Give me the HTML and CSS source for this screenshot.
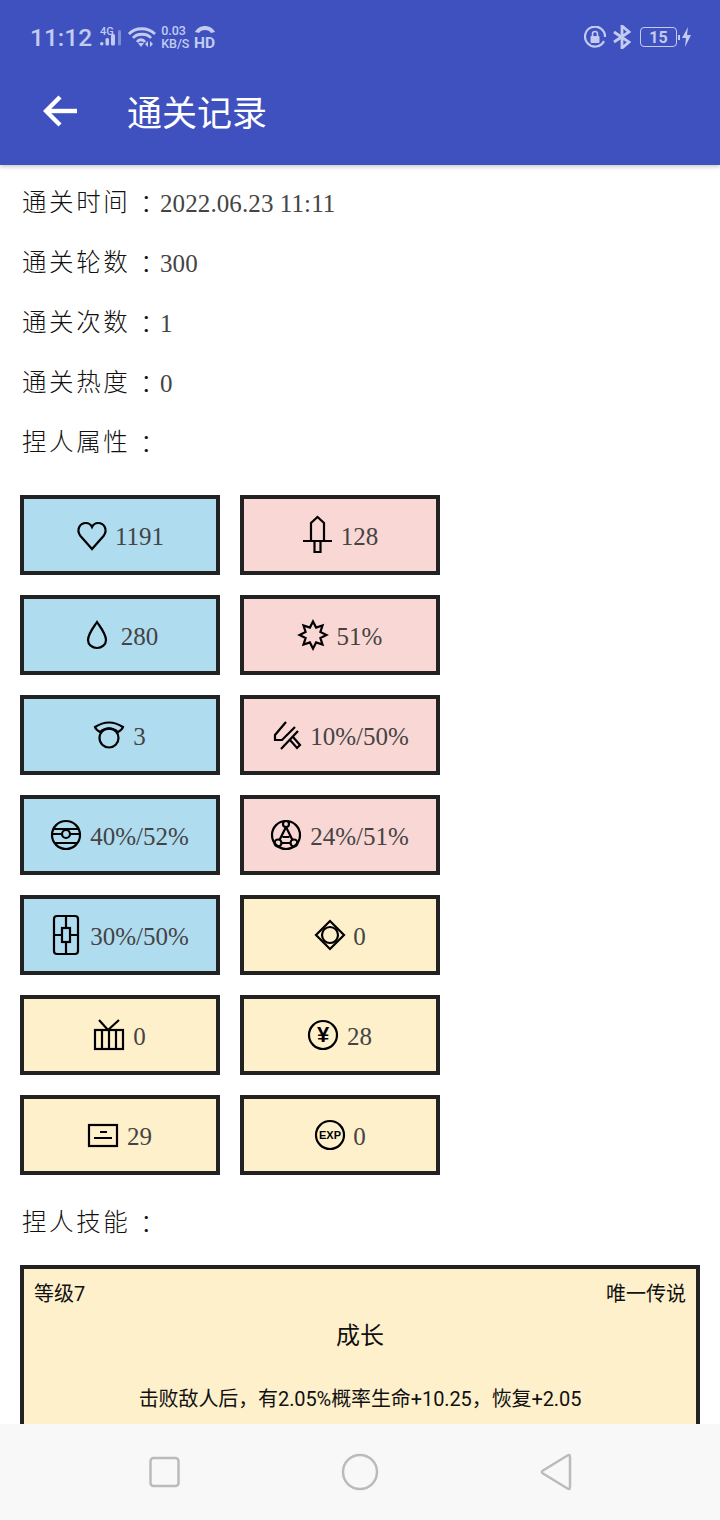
FILE: index.html
```html
<!DOCTYPE html>
<html>
  <head>
    <title>通关记录</title>
    <link rel="stylesheet" href="styles.css">
  </head>
  <body>
    <div class="app">
      <!-- Status bar and toolbar -->
      <header class="appbar">
        <div class="statusbar">
          <div class="status-left">
            <span class="clock">11:12</span>
            <svg class="st-signal" width="26" height="24" viewBox="0 0 26 24">
              <text x="1" y="10" class="st-tiny">4G</text>
              <rect x="1" y="17" width="3.500" height="3.500" rx="1.700" fill="#c3cbf0"/>
              <rect x="6.500" y="13" width="3.500" height="7.500" rx="1.500" fill="#c3cbf0"/>
              <rect x="12" y="9" width="4" height="11.500" rx="1.500" fill="#c3cbf0"/>
              <rect x="19" y="5" width="3" height="15.500" rx="1.500" fill="#7f8dd6"/>
            </svg>
            <svg class="st-wifi" width="28" height="22" viewBox="0 0 28 22" fill="none" stroke="#c3cbf0" stroke-width="2.800">
              <path d="M1 8C7 1 20 1 27 8"/>
              <path d="M5 12C9 7 19 7 23 12"/>
              <path d="M9 16C11 13 15 13 17 16"/>
              <path d="M13 21L10 17H16Z" fill="#c3cbf0" stroke="none"/>
              <path d="M20 15V21L17 18ZM22 15V21L25 18Z" fill="#c3cbf0" stroke="none"/>
            </svg>
            <span class="st-speed"><span>0.03</span><span>KB/S</span></span>
            <svg class="st-hd" width="24" height="28" viewBox="0 0 24 28">
              <path d="M1 9C5 1 17 1 21 9L17 10C15 6 7 6 5 10Z" fill="#c3cbf0"/>
              <text x="0" y="25" class="st-hd-text">HD</text>
            </svg>
          </div>
          <div class="status-right">
            <svg width="22" height="22" viewBox="0 0 22 22" fill="none" stroke="#c3cbf0" stroke-width="2.200">
              <path d="M20 15A10 10 0 1 1 21 11"/>
              <rect x="6.500" y="10" width="9" height="7" rx="1" fill="#c3cbf0" stroke="none"/>
              <path d="M8.500 10V8A2.500 2.500 0 0 1 13.500 8V10" stroke-width="1.600"/>
            </svg>
            <svg width="18" height="24" viewBox="0 0 18 24" fill="none" stroke="#c3cbf0" stroke-width="2.800">
              <path d="M1 7L16 17L9 23V1L16 7L1 17"/>
            </svg>
            <div class="battery"><span class="battery-level">15</span></div>
            <span class="battery-tip"></span>
            <svg class="st-bolt" width="9" height="20" viewBox="0 0 9 20">
              <path d="M6 0L0 11H4L3 20L9 8H5Z" fill="#c3cbf0"/>
            </svg>
          </div>
        </div>
        <div class="toolbar">
          <svg class="back" width="34" height="32" viewBox="0 0 34 32" fill="none" stroke="#fff" stroke-width="4.400">
            <path d="M34 16H4"/>
            <path d="M17 2L3 16L17 30"/>
          </svg>
          <h1 class="title">通关记录</h1>
        </div>
      </header>

      <div class="content">
        <div class="info-row"><span class="label">通关时间</span><span class="colon">：</span><span class="value">2022.06.23 11:11</span></div>
        <div class="info-row"><span class="label">通关轮数</span><span class="colon">：</span><span class="value">300</span></div>
        <div class="info-row"><span class="label">通关次数</span><span class="colon">：</span><span class="value">1</span></div>
        <div class="info-row"><span class="label">通关热度</span><span class="colon">：</span><span class="value">0</span></div>
        <div class="info-row"><span class="label">捏人属性</span><span class="colon">：</span></div>

        <div class="stats">
          <div class="stat blue">
            <svg class="icon" viewBox="0 0 30 40"><path d="M16 34L4.500 21C0 15 3.500 8 10 8C13 8 15 10 16 12C17 10 19 8 22 8C28.500 8 32 15 27.500 21Z"/></svg>
            <span class="num">1191</span>
          </div>
          <div class="stat pink">
            <svg class="icon" viewBox="0 0 30 40"><path d="M9 26V8L15.500 2L22 8V26M1 26H30M12.500 26V37H18.500V26"/></svg>
            <span class="num">128</span>
          </div>
          <div class="stat blue">
            <svg class="icon" viewBox="0 0 30 40"><path d="M15 7C11 13 6 19 6 25A9 8 0 0 0 24 25C24 19 19 13 15 7Z"/></svg>
            <span class="num">280</span>
          </div>
          <div class="stat pink">
            <svg class="icon" viewBox="0 0 30 40"><path d="M15 6.500L18.100 12.600L24.500 10.500L22.400 16.900L28.500 20L22.400 23.100L24.500 29.500L18.100 27.400L15 33.500L11.900 27.400L5.500 29.500L7.600 23.100L1.500 20L7.600 16.900L5.500 10.500L11.900 12.600Z"/></svg>
            <span class="num">51%</span>
          </div>
          <div class="stat blue">
            <svg class="icon" viewBox="0 0 30 40"><circle cx="15" cy="23" r="9.500"/><path d="M1 12Q15 3 29 12Q28 15 24 17Q15 10 6 17Q2 15 1 12Z"/></svg>
            <span class="num">3</span>
          </div>
          <div class="stat pink">
            <svg class="icon" viewBox="0 0 30 40"><path d="M15 7L4 20V25H11L24 12M10 34L27 16M19 25L26 33L29 30L22 22"/></svg>
            <span class="num">10%/50%</span>
          </div>
          <div class="stat blue">
            <svg class="icon" viewBox="0 0 30 40"><circle cx="15" cy="20" r="14"/><circle cx="15" cy="19" r="4"/><path d="M2.500 14H27.500M1 19H11M19 19H29M3.500 28H26.500"/></svg>
            <span class="num">40%/52%</span>
          </div>
          <div class="stat pink">
            <svg class="icon" viewBox="0 0 30 40"><circle cx="15" cy="20" r="14"/><circle cx="15" cy="9" r="3"/><circle cx="7" cy="28" r="3.500"/><circle cx="23" cy="28" r="3.500"/><path d="M15 12L8.500 25M15 12L21.500 25M11.500 22H18.500M10.500 28H19.500"/></svg>
            <span class="num">24%/51%</span>
          </div>
          <div class="stat blue">
            <svg class="icon" viewBox="0 0 30 40"><rect x="3" y="1" width="24" height="38" rx="3"/><rect x="11" y="13" width="8" height="14"/><path d="M15 1V13M15 27V39M3 20H11M19 20H27"/></svg>
            <span class="num">30%/50%</span>
          </div>
          <div class="stat cream">
            <svg class="icon" viewBox="0 0 30 40"><path d="M16 6L30 20L16 34L2 20Z"/><circle cx="16" cy="20" r="8"/></svg>
            <span class="num">0</span>
          </div>
          <div class="stat cream">
            <svg class="icon" viewBox="0 0 30 40"><rect x="1" y="15" width="28" height="19"/><path d="M8 15V34M15 15V34M22 15V34M5 5L14 15L25 5"/></svg>
            <span class="num">0</span>
          </div>
          <div class="stat cream">
            <svg class="icon" viewBox="0 0 30 40"><circle cx="15" cy="20" r="14"/><text x="15" y="27" class="icon-text yen">¥</text></svg>
            <span class="num">28</span>
          </div>
          <div class="stat cream">
            <svg class="icon" viewBox="0 0 30 40"><rect x="1" y="10" width="28" height="21"/><path d="M12 17H19M6 23H24"/></svg>
            <span class="num">29</span>
          </div>
          <div class="stat cream">
            <svg class="icon" viewBox="0 0 30 40"><circle cx="16" cy="20" r="14"/><text x="16" y="24" class="icon-text exp">EXP</text></svg>
            <span class="num">0</span>
          </div>
        </div>

        <div class="info-row skills-head"><span class="label">捏人技能</span><span class="colon">：</span></div>

        <div class="skill">
          <div class="skill-top">
            <span>等级7</span>
            <span>唯一传说</span>
          </div>
          <div class="skill-name">成长</div>
          <div class="skill-desc">击败敌人后，有2.05%概率生命+10.25，恢复+2.05</div>
        </div>
      </div>

      <!-- Navigation bar -->
      <nav class="navbar">
        <svg width="32" height="32" viewBox="0 0 32 32"><rect x="2.500" y="2" width="28" height="28" rx="3"/></svg>
        <svg width="38" height="38" viewBox="0 0 38 38"><circle cx="19" cy="19" r="17"/></svg>
        <svg width="32" height="38" viewBox="0 0 32 38"><path d="M30 4C30 2 29 1.500 27.500 2.500L3 17.500C1.500 18.500 1.500 19.500 3 20.500L27.500 35.500C29 36.500 30 36 30 34Z"/></svg>
      </nav>
    </div>
  </body>
</html>
```

FILE: styles.css
```css
body {
  margin: 0;
  background-color: #fff;
  font-family: "Noto Sans CJK SC", sans-serif;
}

.app {
  display: flex;
  flex-direction: column;
  width: 720px;
  height: 1520px;
  overflow: hidden;
}

/* App bar */
.appbar {
  position: relative;
  z-index: 1;
  flex: none;
  height: 165px;
  background-color: #3f51bf;
  box-shadow: 0 2px 4px rgba(0,0,0,0.2);
}

.statusbar {
  display: flex;
  align-items: center;
  justify-content: space-between;
  height: 74px;
  padding: 0 29px 0 30px;
  color: #c3cbf0;
  font-family: Roboto, sans-serif;
}

.status-left,
.status-right {
  display: flex;
  align-items: center;
}

.clock {
  font-size: 24.5px;
  font-weight: 500;
}

.st-signal {
  margin-left: 7px;
}

.st-tiny {
  fill: #c3cbf0;
  font-size: 11px;
  font-weight: 500;
}

.st-wifi {
  margin-left: 3px;
}

.st-speed {
  display: flex;
  flex-direction: column;
  margin-left: 5px;
  font-size: 12.5px;
  line-height: 13px;
  font-weight: 500;
}

.st-hd {
  margin-left: 5px;
}

.st-hd-text {
  fill: #c3cbf0;
  font-size: 15.5px;
  font-weight: 700;
}

.status-right svg + svg {
  margin-left: 7px;
}

.battery {
  display: flex;
  align-items: center;
  justify-content: center;
  box-sizing: border-box;
  width: 37px;
  height: 20px;
  margin-left: 9px;
  border: 1.5px solid #c3cbf0;
  border-radius: 4px;
}

.battery-level {
  font-size: 16px;
  font-weight: 700;
}

.battery-tip {
  width: 2px;
  height: 5px;
  margin-left: 1px;
  background-color: #c3cbf0;
}

.status-right .st-bolt {
  margin-left: 2px;
}

.toolbar {
  display: flex;
  align-items: center;
  height: 74px;
  padding: 0 0 0 43px;
}

.title {
  margin: 0 0 0 50px;
  color: #fff;
  font-size: 35px;
  font-weight: 400;
  line-height: 74px;
}

/* Record content */
.content {
  flex: 1;
  min-height: 0;
  overflow: hidden;
  padding: 8px 20px 0;
}

.info-row {
  display: flex;
  align-items: center;
  height: 60px;
  padding-left: 2px;
  color: #111;
  font-size: 24.5px;
  white-space: nowrap;
}

.label {
  flex: none;
  width: 108px;
  padding-bottom: 5px;
  letter-spacing: 2.6px;
  font-weight: 300;
}

.colon {
  flex: none;
  width: 30px;
  padding-bottom: 1px;
  font-family: "Noto Sans CJK TC", sans-serif;
  font-weight: 300;
  text-indent: 4px;
}

.value,
.num {
  font-family: "Liberation Serif", serif;
  font-size: 25px;
  color: #444;
}

.value {
  padding-top: 2px;
  letter-spacing: 0.1px;
}

/* Stats grid */
.stats {
  display: grid;
  grid-template-columns: repeat(2, 200px);
  grid-auto-rows: 80px;
  gap: 20px;
  margin-top: 22px;
}

.stat {
  display: flex;
  align-items: center;
  justify-content: center;
  gap: 9px;
  box-sizing: border-box;
  border: 4px solid #222;
}

.blue {
  background-color: #b0dcf0;
}

.pink {
  background-color: #f9d7d4;
}

.cream {
  background-color: #fff0cc;
}

.icon {
  flex: none;
  width: 30px;
  height: 40px;
  overflow: visible;
  fill: none;
  stroke: #000;
  stroke-width: 2.2;
}

.icon-text {
  fill: #000;
  stroke: none;
  font-family: "Liberation Sans", sans-serif;
  font-weight: 700;
  text-anchor: middle;
}

.yen {
  font-size: 22px;
}

.exp {
  font-size: 11px;
}

.num {
  padding-top: 4px;
}

.skills-head {
  margin-top: 18px;
}

/* Skill card */
.skill {
  box-sizing: border-box;
  height: 240px;
  margin-top: 12px;
  padding: 12px 10px;
  border: 4px solid #222;
  background-color: #fff0cc;
  color: #111;
  font-family: Roboto, "Noto Sans CJK SC", sans-serif;
}

.skill-top {
  display: flex;
  justify-content: space-between;
  font-size: 20px;
  line-height: 26px;
}

.skill-name {
  margin-top: 13px;
  font-size: 24px;
  line-height: 32px;
  text-align: center;
}

.skill-desc {
  margin-top: 33px;
  font-size: 20px;
  line-height: 28px;
  letter-spacing: -0.1px;
  text-align: center;
}

/* Navigation bar */
.navbar {
  display: flex;
  flex: none;
  align-items: center;
  justify-content: center;
  gap: 161px;
  height: 96px;
  background-color: #f8f8f8;
}

.navbar svg {
  fill: none;
  stroke: #bbb;
  stroke-width: 2.5;
}
```
